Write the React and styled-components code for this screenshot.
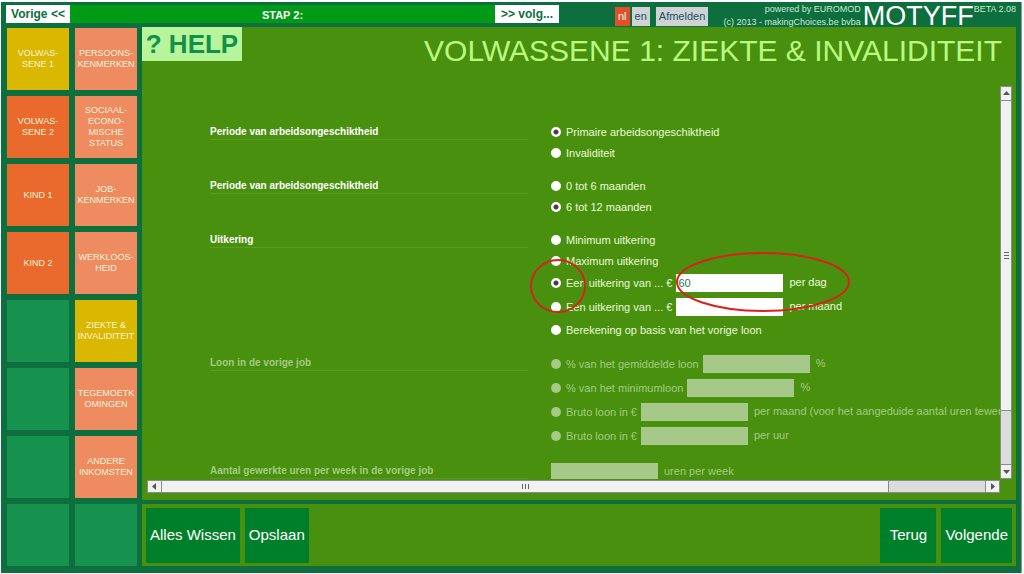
import React, { useState } from 'react'
import styled, { createGlobalStyle, css } from 'styled-components'

const theme = {
  frame: '#0d6f3d',
  panel: '#49900f',
  help: '#b7f59a',
  title: '#bbfa80',
  current: '#dab700',
  person: '#e96a2c',
  topic: '#ee8b60',
  empty: '#16924e',
  button: '#007f2a',
  bar: '#009a17',
  text: '#e9fbd8',
  faded: '#a3cb84'
}

const GlobalStyle = createGlobalStyle`
  *, *::before, *::after {
    box-sizing: border-box;
  }
  body {
    margin: 0;
    background: #fff;
    font-family: 'Liberation Sans', Arial, sans-serif;
    font-size: 11px;
    color: ${theme.text};
  }
  button, input {
    font-family: inherit;
    margin: 0;
    padding: 0;
    border: 0;
    border-radius: 0;
  }
  button {
    cursor: pointer;
  }
`

const Frame = styled.div`
  margin: 2px 2px 0 1px;
  padding: 0 5px 7px;
  background: ${theme.frame};
  border-right: 1px solid #8a9a90;
`

const TopBar = styled.header`
  display: flex;
  height: 25px;
`

const Steps = styled.nav`
  display: flex;
  flex: 0 1 553px;
  height: 18px;
  margin-top: 3px;
`

const StepButton = styled.button`
  width: 64px;
  background: #fff;
  color: ${theme.frame};
  font-size: 12px;
  font-weight: 700;
  white-space: nowrap;
`

const StepTitle = styled.div`
  flex: 1;
  background: ${theme.bar};
  color: #fff;
  font-size: 11px;
  font-weight: 700;
  line-height: 20px;
  text-align: center;
`

const Session = styled.div`
  display: flex;
  gap: 2px;
  height: 19px;
  margin: 5px 0 0 56px;
`

const SessionButton = styled.button`
  padding: 0 3px 2px;
  font-size: 11px;
  background: ${p => (p.$active ? '#e0502c' : '#cfd3d4')};
  color: ${p => (p.$active ? '#fff' : '#24506a')};

  &:last-child {
    margin-left: 4px;
  }
`

const Brand = styled.div`
  display: flex;
  flex: 1;
  justify-content: flex-end;
  color: #cfe9d3;
  font-size: 9px;
  white-space: nowrap;
`

const Credits = styled.div`
  padding-top: 1px;
  line-height: 13px;
  text-align: right;
`

const Logo = styled.div`
  margin-left: 2px;
  color: #fff;
  font-size: 27px;
  line-height: 28px;
`

const Version = styled.div`
  padding-top: 1px;
  line-height: 13px;
`

const Body = styled.div`
  display: grid;
  grid-template-columns: auto minmax(0, 1fr);
  gap: 5px;
`

const Tiles = styled.nav`
  display: grid;
  grid-template-columns: 62px 62px;
  grid-auto-rows: 62px;
  gap: 6px;
  padding: 1px 0 0 1px;
`

const tileBox = css`
  background: ${p => theme[p.$kind]};
`

const Tile = styled.button`
  ${tileBox}
  color: #fdf3d8;
  font-size: 9px;
  line-height: 11px;
  text-align: center;
  white-space: pre-line;
`

const EmptyTile = styled.div`
  ${tileBox}
`

const Main = styled.main`
  display: flex;
  flex-direction: column;
  gap: 4px;
`

const Panel = styled.section`
  flex: 1;
  background: ${theme.panel};
`

const PanelHeader = styled.div`
  display: flex;
  justify-content: space-between;
  align-items: flex-start;
  height: 59px;
  padding-right: 14px;
`

const HelpButton = styled.button`
  width: 100px;
  height: 34px;
  background: ${theme.help};
  color: #13904a;
  font-size: 26px;
  font-weight: 700;
`

const Title = styled.h1`
  margin: 0;
  padding-top: 6px;
  color: ${theme.title};
  font-size: 30px;
  font-weight: 400;
  line-height: 36px;
`

const Scroller = styled.div`
  display: grid;
  grid-template-columns: minmax(0, 1fr) 12px;
  padding: 0 4px 0 5px;
`

const Viewport = styled.div`
  height: 393px;
  padding: 35px 0 0 63px;
  overflow: hidden;
`

const Form = styled.form`
  display: flex;
  flex-direction: column;
  gap: 12px;
`

const Group = styled.fieldset`
  position: relative;
  display: grid;
  grid-template-columns: 318px minmax(0, 1fr);
  column-gap: 23px;
  min-width: 0;
  margin: 0;
  padding: 0;
  border: 0;
`

const GroupLabel = styled.div`
  height: 19px;
  border-bottom: 1px solid #579d22;
  color: ${p => (p.$off ? theme.faded : '#fff')};
  font-size: 10px;
  font-weight: 700;
  line-height: 21px;
`

const Option = styled.div`
  display: flex;
  align-items: center;
  height: ${p => (p.$tall ? '24px' : '21px')};
  color: ${p => (p.$off ? theme.faded : theme.text)};
  white-space: nowrap;
`

const OptionLabel = styled.label`
  display: flex;
  align-items: center;
  gap: 5px;
  line-height: 16px;
`

const Radio = styled.input.attrs({ type: 'radio' })`
  appearance: none;
  width: 10px;
  height: 10px;
  border-radius: 50%;
  background: #fff;

  &:checked {
    background: radial-gradient(circle, #4b3a4d 0 2px, #fff 3px);
  }
  &:disabled {
    background: #a6c98a;
  }
`

const Amount = styled.input.attrs({ type: 'text' })`
  width: 107px;
  height: 18px;
  margin-left: ${p => (p.$first ? '0' : '4px')};
  padding: 0 2px;
  background: #fff;
  color: #1c7a55;
  font-size: 11px;

  &:disabled {
    background: #a6c98a;
  }
`

const Unit = styled.span`
  padding: 0 0 3px 6px;
`

const Marks = styled.svg`
  position: absolute;
  top: 16px;
  left: 318px;
  pointer-events: none;
`

const scrollPart = css`
  display: flex;
  align-items: center;
  justify-content: center;
  background: #f1f1f1;
  border: 1px solid #8b8b8b;
`

const ScrollTrack = styled.div`
  display: flex;
  flex-direction: ${p => (p.$vertical ? 'column' : 'row')};
  height: ${p => (p.$vertical ? 'auto' : '13px')};
  margin-top: ${p => (p.$vertical ? '0' : '1px')};
  background: #dcdcdc;
  border: solid #8b8b8b;
  border-width: ${p => (p.$vertical ? '0 1px' : '1px 0')};
`

const ScrollArrow = styled.button`
  ${scrollPart}
  flex: 0 0 15px;
  margin: ${p => (p.$vertical ? '0 -1px' : '-1px 0')};
`

const ScrollThumb = styled.div`
  ${scrollPart}
  flex: ${p => p.$size} 1 0;
  margin: ${p => (p.$vertical ? '-1px -1px 0' : '-1px 0 -1px -1px')};
`

const ScrollRest = styled.div`
  flex: ${p => p.$size} 1 0;
`

const Actions = styled.footer`
  display: flex;
  gap: 5px;
  padding: 4px 4px 3px;
  background: ${theme.panel};
`

const ActionButton = styled.button`
  min-width: 56px;
  height: 55px;
  padding: 0 4px 2px;
  background: ${theme.button};
  color: #fff;
  font-size: 15px;
`

const Spacer = styled.div`
  flex: 1;
`

const tiles = [
  ['current', 'VOLWAS-\nSENE 1'],
  ['topic', 'PERSOONS-\nKENMERKEN'],
  ['person', 'VOLWAS-\nSENE 2'],
  ['topic', 'SOCIAAL-\nECONO-\nMISCHE\nSTATUS'],
  ['person', 'KIND 1'],
  ['topic', 'JOB-\nKENMERKEN'],
  ['person', 'KIND 2'],
  ['topic', 'WERKLOOS-\nHEID'],
  ['empty'],
  ['current', 'ZIEKTE &\nINVALIDITEIT'],
  ['empty'],
  ['topic', 'TEGEMOETK\nOMINGEN'],
  ['empty'],
  ['topic', 'ANDERE\nINKOMSTEN'],
  ['empty'],
  ['empty']
]

const groups = [
  {
    name: 'periode',
    label: 'Periode van arbeidsongeschiktheid',
    selected: 0,
    options: [{ text: 'Primaire arbeidsongeschiktheid' }, { text: 'Invaliditeit' }]
  },
  {
    name: 'duur',
    label: 'Periode van arbeidsongeschiktheid',
    selected: 1,
    options: [{ text: '0 tot 6 maanden' }, { text: '6 tot 12 maanden' }]
  },
  {
    name: 'uitkering',
    label: 'Uitkering',
    selected: 2,
    marked: true,
    options: [
      { text: 'Minimum uitkering' },
      { text: 'Maximum uitkering' },
      { text: 'Een uitkering van ... €', unit: 'per dag', value: '60' },
      { text: 'Een uitkering van ... €', unit: 'per maand' },
      { text: 'Berekening op basis van het vorige loon' }
    ]
  },
  {
    name: 'loon',
    label: 'Loon in de vorige job',
    off: true,
    options: [
      { text: '% van het gemiddelde loon', unit: '%' },
      { text: '% van het minimumloon', unit: '%' },
      { text: 'Bruto loon in €', unit: 'per maand (voor het aangeduide aantal uren tewerks' },
      { text: 'Bruto loon in €', unit: 'per uur' }
    ]
  },
  {
    name: 'uren',
    label: 'Aantal gewerkte uren per week in de vorige job',
    off: true,
    options: [{ unit: 'uren per week' }]
  }
]

const Arrow = ({ points }) => (
  <svg width="7" height="7" viewBox="0 0 7 7">
    <polygon points={points} fill="#555" />
  </svg>
)

const Grip = ({ vertical }) => (
  <svg width="7" height="7" viewBox="0 0 7 7">
    <path
      d={vertical ? 'M1 .5h5M1 3.5h5M1 6.5h5' : 'M.5 1v5M3.5 1v5M6.5 1v5'}
      stroke="#666"
    />
  </svg>
)

const QuestionGroup = ({ group }) => {
  const [selected, setSelected] = useState(group.selected)
  return (
    <Group disabled={group.off} aria-label={group.label}>
      <GroupLabel $off={group.off}>{group.label}</GroupLabel>
      <div>
        {group.options.map((o, i) => (
          <Option key={i} $tall={!!o.unit} $off={group.off}>
            {o.text && (
              <OptionLabel>
                <Radio
                  name={group.name}
                  checked={selected === i}
                  onChange={() => setSelected(i)}
                />
                {o.text}
              </OptionLabel>
            )}
            {o.unit && (
              <Amount
                $first={!o.text}
                aria-label={`${o.text || group.label} ${o.unit}`}
                defaultValue={o.value}
              />
            )}
            {o.unit && <Unit>{o.unit}</Unit>}
          </Option>
        ))}
      </div>
      {group.marked && (
        <Marks width="326" height="70" fill="none" stroke="#d8221b" strokeWidth="2">
          <ellipse cx="30" cy="41" rx="27" ry="26" />
          <ellipse cx="235" cy="37" rx="86" ry="29" />
        </Marks>
      )}
    </Group>
  )
}

const App = () => (
  <Frame>
    <GlobalStyle />
    <TopBar>
      <Steps>
        <StepButton>Vorige &lt;&lt;</StepButton>
        <StepTitle>STAP 2:</StepTitle>
        <StepButton>&gt;&gt; volg...</StepButton>
      </Steps>
      <Session>
        <SessionButton $active>nl</SessionButton>
        <SessionButton>en</SessionButton>
        <SessionButton>Afmelden</SessionButton>
      </Session>
      <Brand>
        <Credits>
          powered by EUROMOD
          <br />
          (c) 2013 - makingChoices.be bvba
        </Credits>
        <Logo>MOTYFF</Logo>
        <Version>BETA 2.08</Version>
      </Brand>
    </TopBar>
    <Body>
      <Tiles>
        {tiles.map(([kind, text], i) =>
          text ? (
            <Tile key={i} $kind={kind}>{text}</Tile>
          ) : (
            <EmptyTile key={i} $kind={kind} />
          )
        )}
      </Tiles>
      <Main>
        <Panel>
          <PanelHeader>
            <HelpButton>? HELP</HelpButton>
            <Title>VOLWASSENE 1: ZIEKTE &amp; INVALIDITEIT</Title>
          </PanelHeader>
          <Scroller>
            <Viewport>
              <Form>
                {groups.map(g => (
                  <QuestionGroup key={g.name} group={g} />
                ))}
              </Form>
            </Viewport>
            <ScrollTrack $vertical>
              <ScrollArrow $vertical aria-label="Omhoog">
                <Arrow points="0,5 3.5,1 7,5" />
              </ScrollArrow>
              <ScrollThumb $vertical $size={311}>
                <Grip vertical />
              </ScrollThumb>
              <ScrollRest $size={53} />
              <ScrollArrow $vertical aria-label="Omlaag">
                <Arrow points="0,2 7,2 3.5,6" />
              </ScrollArrow>
            </ScrollTrack>
            <ScrollTrack>
              <ScrollArrow aria-label="Links">
                <Arrow points="5,0 5,7 1,3.5" />
              </ScrollArrow>
              <ScrollThumb $size={727}>
                <Grip />
              </ScrollThumb>
              <ScrollRest $size={96} />
              <ScrollArrow aria-label="Rechts">
                <Arrow points="2,0 6,3.5 2,7" />
              </ScrollArrow>
            </ScrollTrack>
          </Scroller>
        </Panel>
        <Actions>
          <ActionButton>Alles Wissen</ActionButton>
          <ActionButton>Opslaan</ActionButton>
          <Spacer />
          <ActionButton>Terug</ActionButton>
          <ActionButton>Volgende</ActionButton>
        </Actions>
      </Main>
    </Body>
  </Frame>
)

export default App
